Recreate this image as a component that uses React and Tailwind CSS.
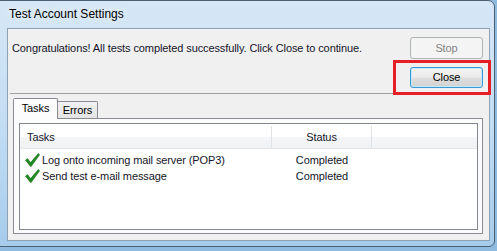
import React from 'react';

// Green check glyph used in the task rows
const CheckMark = () => (
  <svg width="15" height="15" viewBox="0 0 15 15" className="shrink-0">
    <path d="M0.5 7.2 L2.4 5.6 L5.6 9.6 L13.3 0.6 L14.6 1.8 L5.8 13.8 Z" fill="#1e8a1e" stroke="#146b14" strokeWidth="0.6" strokeLinejoin="round" />
  </svg>
);

const tasks = [
  { name: 'Log onto incoming mail server (POP3)', status: 'Completed' },
  { name: 'Send test e-mail message', status: 'Completed' },
];

export default function App() {
  return (
    <div className="w-[497px] h-[251px] overflow-hidden bg-[#8fbbe0] font-['Liberation_Sans',Arial,sans-serif] text-[11px] tracking-[-0.1px] text-[#15152a] whitespace-nowrap">
      {/* Fenster-Rahmen */}
      <div className="ml-[-1px] w-[496px] h-[247px] border border-[#4d5f73] rounded-tr-[7px] rounded-br-[6px] bg-gradient-to-b from-[#d6e7f6] via-[#c3ddf3] to-[#a6cbeb] flex flex-col pl-[7px] pr-[4px] pb-[5px]">
        {/* Titelleiste */}
        <div className="h-[27px] flex items-center pl-[2px] pb-[1px] text-[12px] tracking-normal text-[#000] [text-shadow:0_0_8px_rgba(255,255,255,0.95)]">
          Test Account Settings
        </div>

        {/* Client-Bereich */}
        <div className="flex-1 bg-[#f0f0f0] border border-[#8ea2b6] flex flex-col">
          <div className="flex items-center justify-between pl-[4px] pr-[6px] pt-[8px]">
            <span>Congratulations! All tests completed successfully. Click Close to continue.</span>
            <button className="shrink-0 w-[73px] h-[22px] rounded-[3px] border border-[#adb2b5] bg-[#f4f4f4] text-[#838383] flex items-center justify-center">
              Stop
            </button>
          </div>

          <div className="flex justify-end pr-[6px] mt-[8px]">
            <div className="relative">
              <button className="w-[73px] h-[21px] rounded-[3px] border border-[#3a9ad6] shadow-[inset_0_0_0_1px_#c4e8f9] bg-[linear-gradient(to_bottom,#f3f3f3_0%,#ececec_48%,#dedede_52%,#d2d2d2_100%)] text-[#000] flex items-center justify-center">
                Close
              </button>
              <div className="absolute -left-[17px] -top-[7px] -right-[8px] -bottom-[7px] border-[3px] border-[#e61e26] pointer-events-none" />
            </div>
          </div>

          <div className="mt-[5px] mx-[2px] h-px bg-[#a0a0a0]" />

          {/* Registerkarten */}
          <div className="mt-[4px] ml-[5px] mr-[6px] flex flex-col">
            <div className="flex items-end h-[20px]">
              <div className="relative z-10 w-[45px] h-[21px] -mb-px border border-b-0 border-[#898c95] bg-[#fcfcfc] rounded-t-[2px] flex items-center justify-center pb-[2px] text-[#000]">
                Tasks
              </div>
              <div className="w-[40px] h-[17px] border border-l-0 border-b-0 border-[#898c95] bg-[linear-gradient(to_bottom,#f2f2f2,#e3e3e3)] rounded-tr-[2px] flex items-center justify-center text-[#000]">
                Errors
              </div>
            </div>

            <div className="h-[116px] border border-[#898c95] bg-[#fcfcfc] pl-[5px] pr-[4px] pt-[4px] pb-[3px] flex">
              {/* Listenansicht */}
              <div className="flex-1 border border-[#828790] bg-white pt-[2px] flex flex-col">
                <div className="h-[23px] flex border-b border-[#e3e5e8] bg-[linear-gradient(to_bottom,#ffffff_0%,#ffffff_50%,#f4f5f7_51%,#f1f2f4_100%)]">
                  <div className="w-[252px] border-r border-[#dfe2e6] pl-[7px] flex items-center pt-[1px]">Tasks</div>
                  <div className="w-[100px] border-r border-[#dfe2e6] flex items-center justify-center pt-[1px]">Status</div>
                  <div className="flex-1" />
                </div>
                <div className="pt-[3px] flex flex-col">
                  {tasks.map((t) => (
                    <div key={t.name} className="h-[16px] flex items-center">
                      <div className="w-[252px] flex items-center pl-[5px] gap-[2px]">
                        <CheckMark />
                        <span>{t.name}</span>
                      </div>
                      <div className="w-[100px] text-center">{t.status}</div>
                    </div>
                  ))}
                </div>
              </div>
            </div>
          </div>
        </div>
      </div>
    </div>
  );
}
